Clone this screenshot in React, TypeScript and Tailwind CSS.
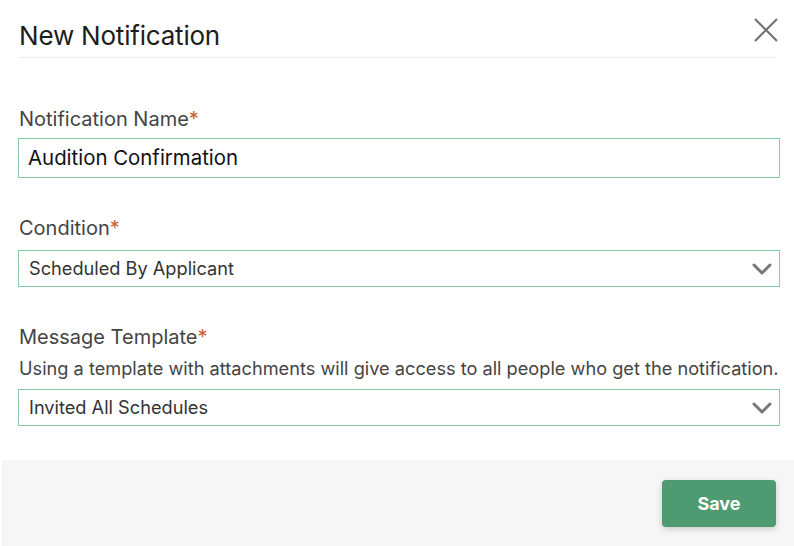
import React from "react";

const Chevron = () => (
  <svg width="20" height="12" viewBox="0 0 20 12" fill="none">
    <path d="M2 2 L10 10 L18 2" stroke="#777" strokeWidth="3" strokeLinecap="round" strokeLinejoin="round" />
  </svg>
);

function Req() {
  return <span className="text-[#c8602a]">*</span>;
}

export default function App() {
  return (
    <div className="w-[794px] h-[546px] bg-white flex flex-col text-[#222]" style={{ fontFamily: "Inter, 'Noto Sans', sans-serif" }}>
      <div className="px-[18px]">
        <div className="flex items-end justify-between h-[58px] border-b border-[#ececec] pb-[8px]">
          <div className="text-[26px] leading-none text-[#1d1d1d] tracking-[-0.2px] pl-[1px]">New Notification</div>
          <svg width="26" height="26" viewBox="0 0 26 26" className="mr-[-3px] mb-[6px]">
            <path d="M2 2 L24 24 M24 2 L2 24" stroke="#707070" strokeWidth="2" />
          </svg>
        </div>
        <div className="pt-[51px]">
          <div className="text-[20px] leading-none text-[#444] pl-[1px]">Notification Name<Req /></div>
          <div className="mt-[9px] h-[40px] w-[762px] border border-[#82cda3] flex items-center px-[9px] text-[20.4px] text-[#111]">
            Audition Confirmation
          </div>
        </div>
        <div className="pt-[40px]">
          <div className="text-[20px] leading-none text-[#444] pl-[1px]">Condition<Req /></div>
          <div className="mt-[12px] h-[37px] w-[762px] border border-[#82cda3] flex items-center justify-between pl-[10px] pr-[7px] text-[18.2px] text-[#333]">
            <span>Scheduled By Applicant</span>
            <Chevron />
          </div>
        </div>
        <div className="pt-[40px]">
          <div className="text-[20px] leading-none text-[#444] pl-[1px]">Message Template<Req /></div>
          <div className="mt-[12px] text-[18.2px] leading-none text-[#444] pl-[1px] whitespace-nowrap">
            Using a template with attachments will give access to all people who get the notification.
          </div>
          <div className="mt-[12px] h-[37px] w-[762px] border border-[#82cda3] flex items-center justify-between pl-[10px] pr-[7px] text-[18.2px] text-[#333]">
            <span>Invited All Schedules</span>
            <Chevron />
          </div>
        </div>
      </div>
      <div className="mt-auto ml-[2px] h-[86px] bg-[#f6f6f6] flex items-center justify-end pr-[18px]">
        <button className="w-[114px] h-[47px] rounded-[4px] bg-[#4f9b71] text-white text-[18px] font-bold shadow-[0_2px_6px_rgba(0,0,0,0.18)]">
          Save
        </button>
      </div>
    </div>
  );
}
